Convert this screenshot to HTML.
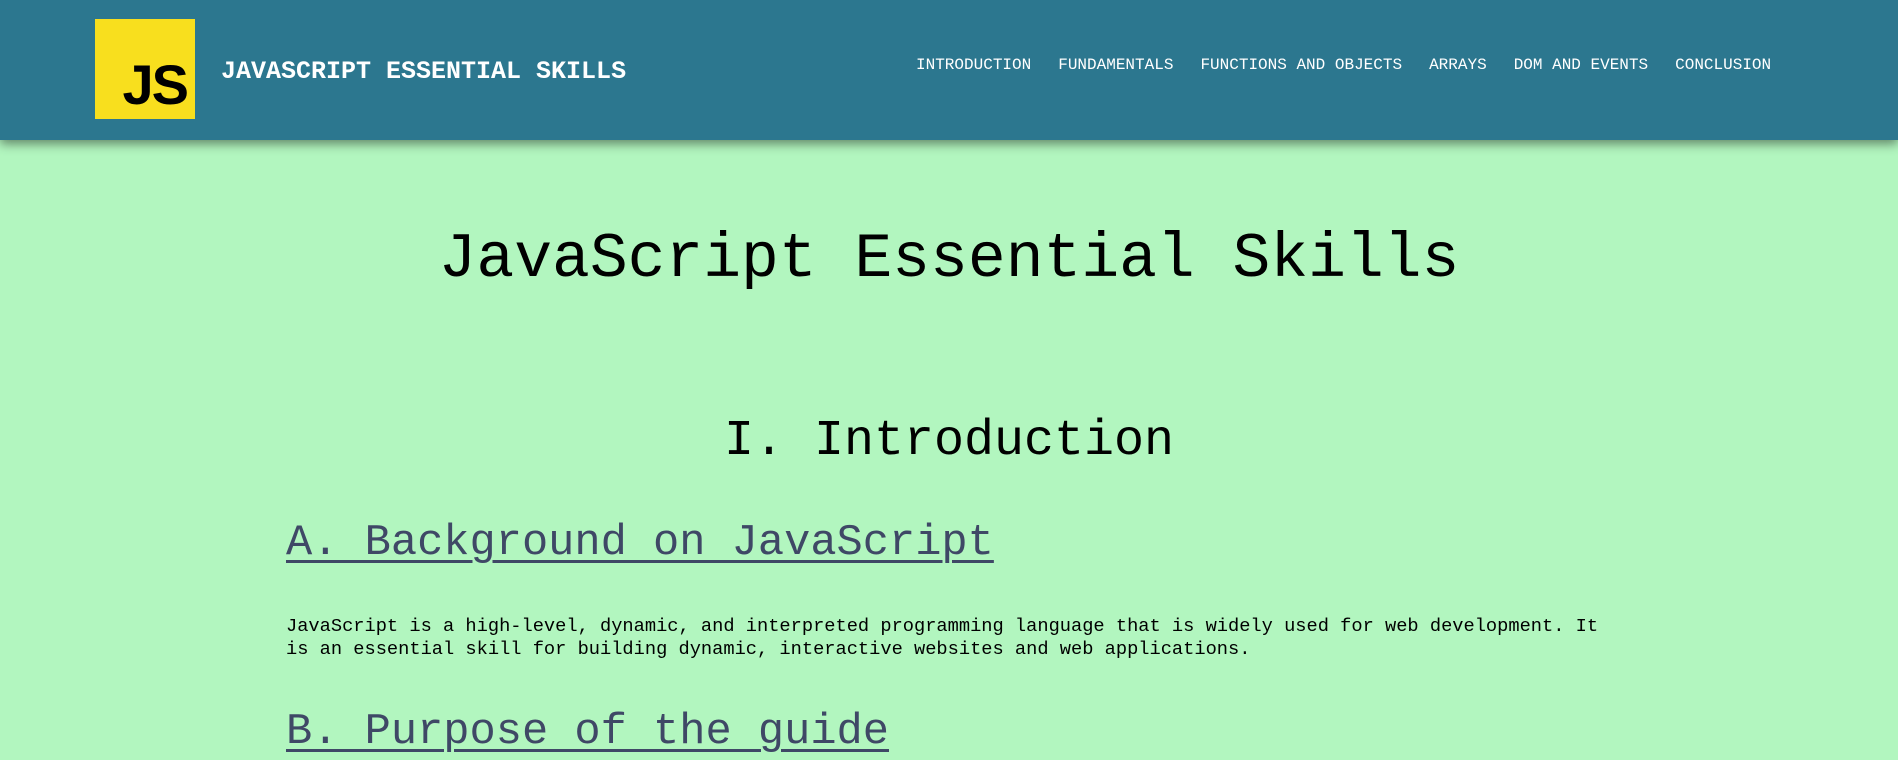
<!DOCTYPE html>
<html><head><meta charset="utf-8"><style>
html,body{margin:0;padding:0;}
body{width:1898px;height:750px;overflow:hidden;background:#b2f6bf;font-family:"Liberation Mono","DejaVu Sans Mono",monospace;position:relative;}
header{position:absolute;left:0;top:0;width:1898px;height:140px;background:#2c778f;box-shadow:0 4px 10px rgba(0,0,0,0.45);}
.logo{position:absolute;left:95px;top:19px;width:100px;height:100px;background:#f8df1e;}
.logo span{position:absolute;right:8px;bottom:2px;font-family:"Liberation Sans",sans-serif;font-weight:bold;font-size:56px;color:#000;letter-spacing:-2px;}
.brand{position:absolute;left:221px;top:57px;color:#fff;font-size:25px;font-weight:bold;line-height:30px;white-space:nowrap;}
nav{position:absolute;left:916px;top:55px;color:#fff;font-size:16px;line-height:20px;white-space:nowrap;}
nav span{margin-right:27px;}
.t{position:absolute;left:0;width:1898px;text-align:center;white-space:nowrap;color:#000;}
h1.t{top:220px;font-size:63px;font-weight:normal;margin:0;line-height:80px;}
h2.t{top:412px;font-size:50px;font-weight:normal;margin:0;line-height:60px;}
h3{position:absolute;left:286px;margin:0;font-size:43.7px;font-weight:normal;color:#3f4866;text-decoration:underline;text-decoration-thickness:3px;text-underline-offset:6px;line-height:54px;white-space:nowrap;}
p{position:absolute;left:286px;top:615px;width:1330px;margin:0;font-size:18.7px;line-height:23px;color:#000;}
</style></head><body>
<header>
<div class="logo"><span>JS</span></div>
<div class="brand">JAVASCRIPT ESSENTIAL SKILLS</div>
<nav><span>INTRODUCTION</span><span>FUNDAMENTALS</span><span>FUNCTIONS AND OBJECTS</span><span>ARRAYS</span><span>DOM AND EVENTS</span><span style="margin-right:0">CONCLUSION</span></nav>
</header>
<h1 class="t">JavaScript Essential Skills</h1>
<h2 class="t">I. Introduction</h2>
<h3 style="top:517px">A. Background on JavaScript</h3>
<p>JavaScript is a high-level, dynamic, and interpreted programming language that is widely used for web development. It is an essential skill for building dynamic, interactive websites and web applications.</p>
<h3 style="top:706px">B. Purpose of the guide</h3>
</body></html>
